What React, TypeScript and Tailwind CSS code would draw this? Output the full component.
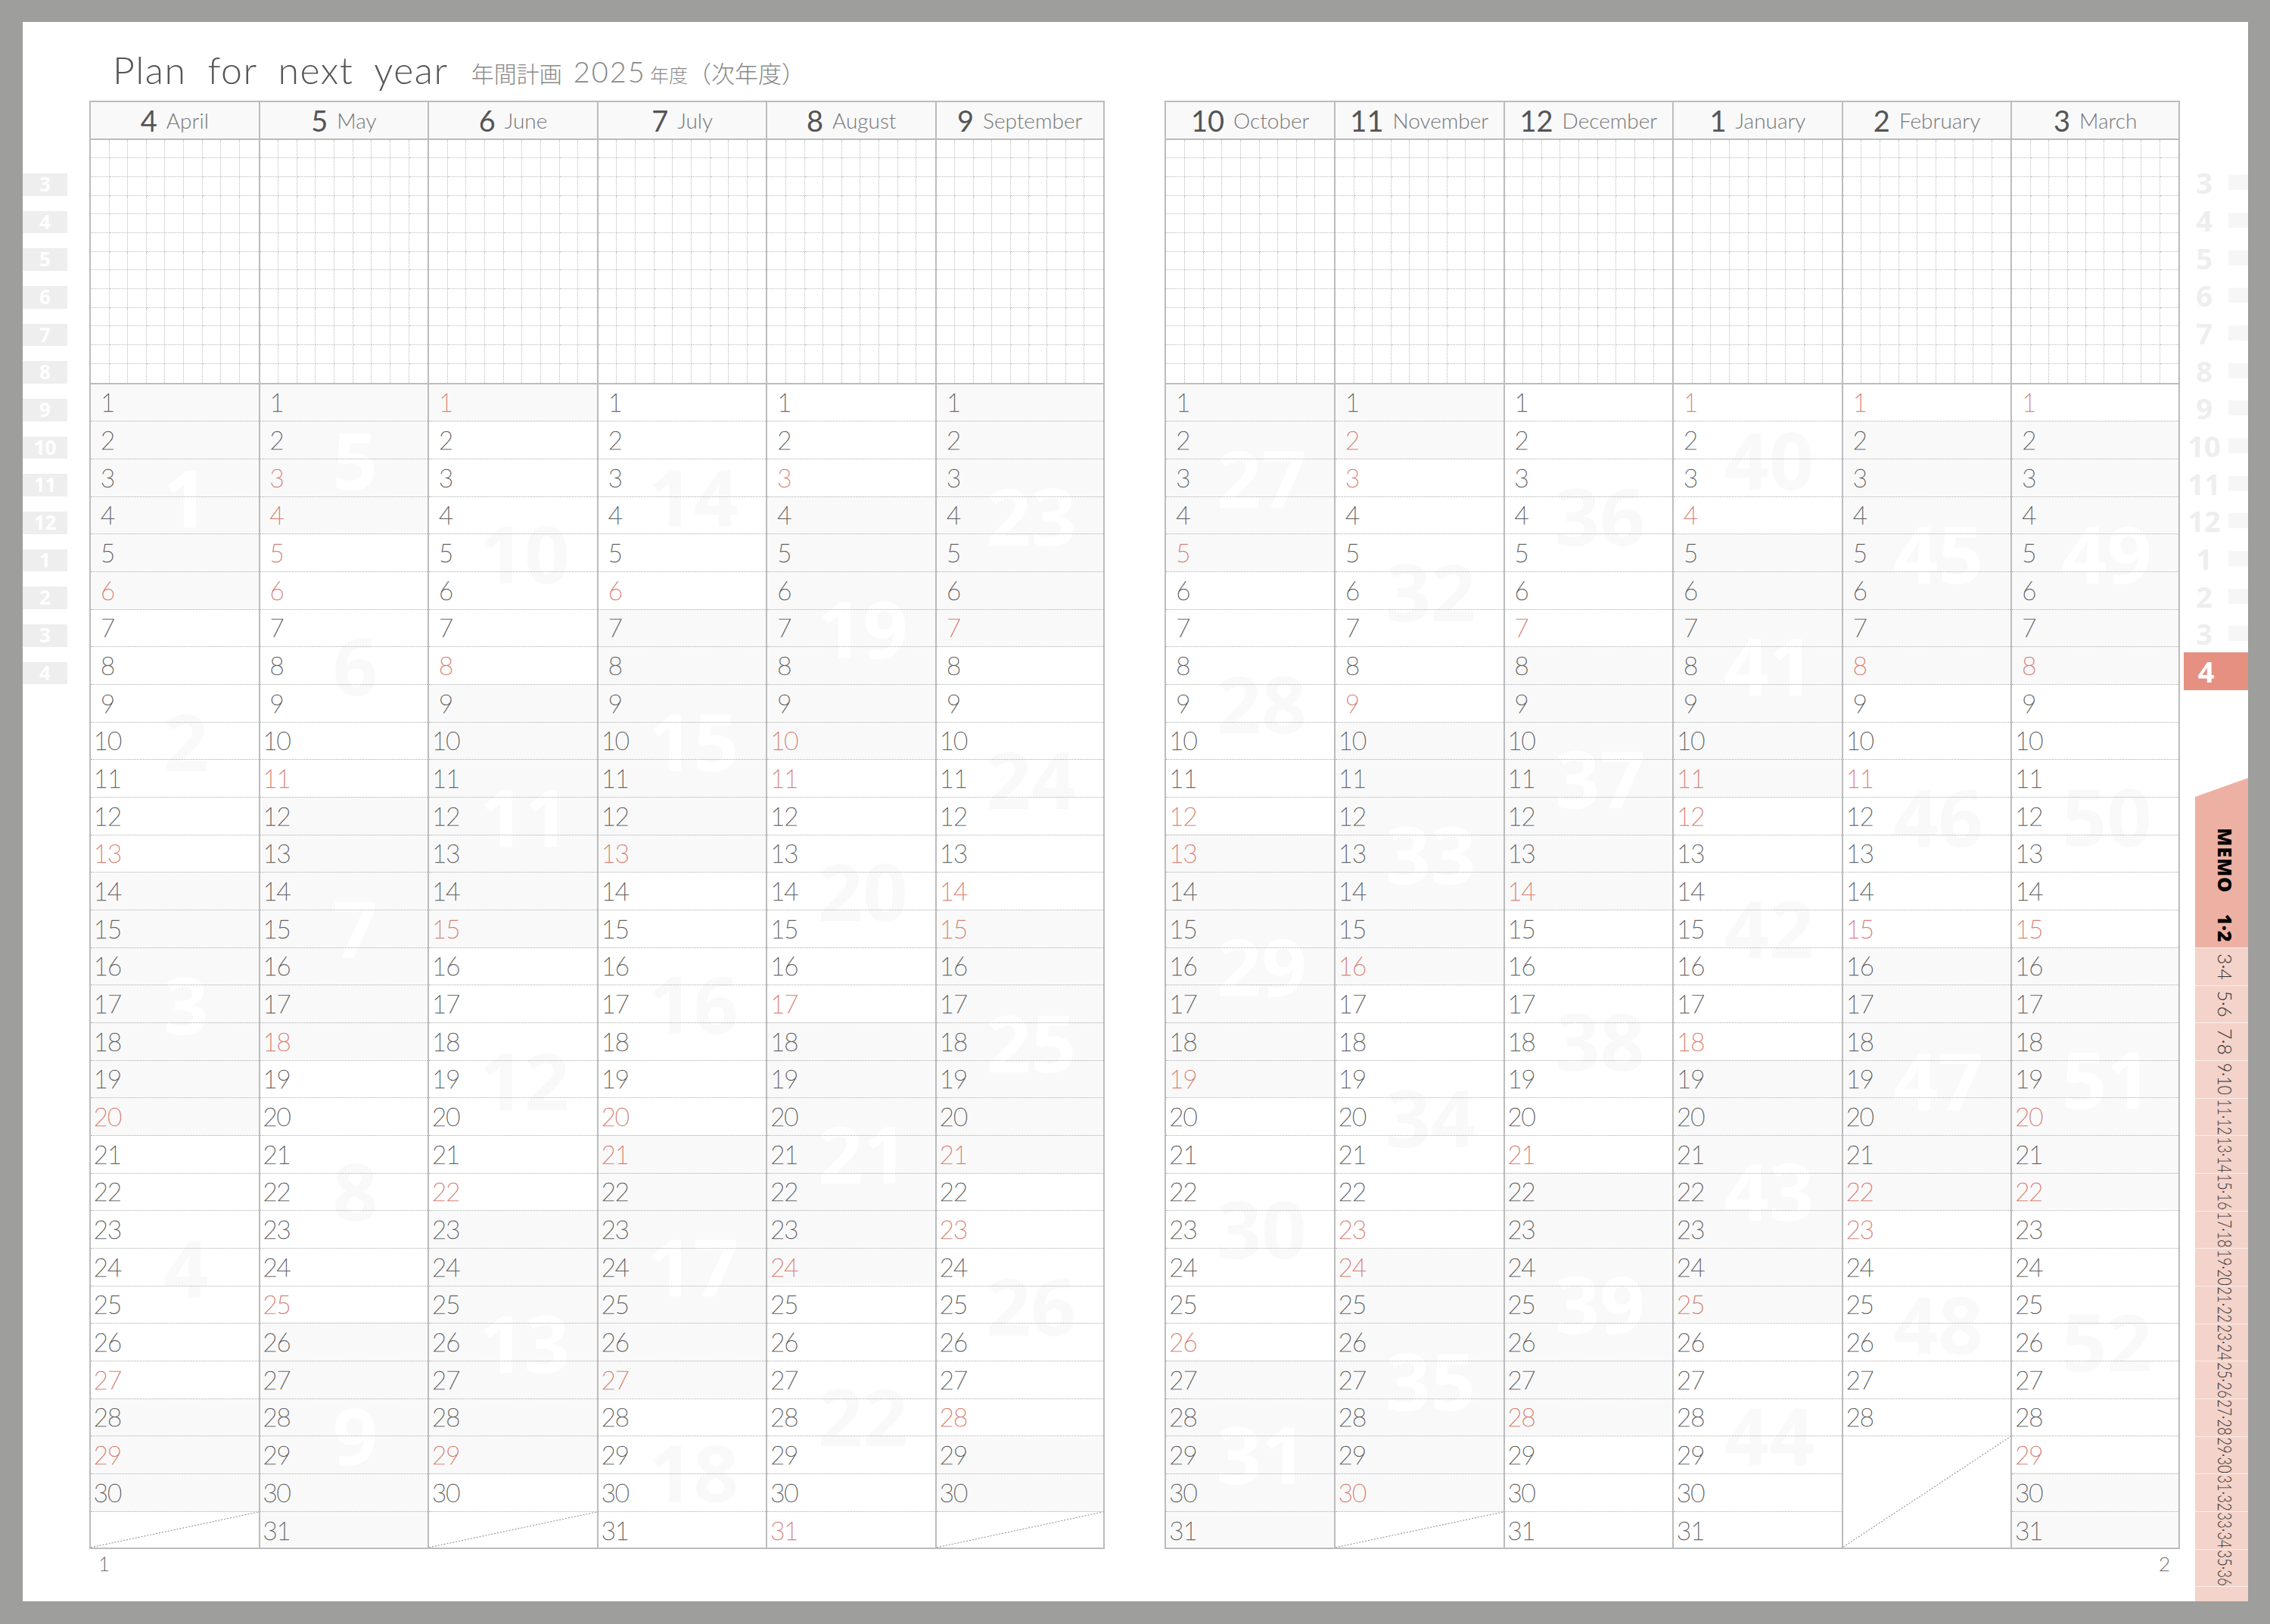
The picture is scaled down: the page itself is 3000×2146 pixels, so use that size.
type Month = { num: number; name: string; year: number; month: number; days: number; reds: number[] }

const firstSpread: Month[] = [
  { num: 4, name: 'April', year: 2025, month: 4, days: 30, reds: [6, 13, 20, 27, 29] },
  { num: 5, name: 'May', year: 2025, month: 5, days: 31, reds: [3, 4, 5, 6, 11, 18, 25] },
  { num: 6, name: 'June', year: 2025, month: 6, days: 30, reds: [1, 8, 15, 22, 29] },
  { num: 7, name: 'July', year: 2025, month: 7, days: 31, reds: [6, 13, 20, 21, 27] },
  { num: 8, name: 'August', year: 2025, month: 8, days: 31, reds: [3, 10, 11, 17, 24, 31] },
  { num: 9, name: 'September', year: 2025, month: 9, days: 30, reds: [7, 14, 15, 21, 23, 28] },
]

const secondSpread: Month[] = [
  { num: 10, name: 'October', year: 2025, month: 10, days: 31, reds: [5, 12, 13, 19, 26] },
  { num: 11, name: 'November', year: 2025, month: 11, days: 30, reds: [2, 3, 9, 16, 23, 24, 30] },
  { num: 12, name: 'December', year: 2025, month: 12, days: 31, reds: [7, 14, 21, 28] },
  { num: 1, name: 'January', year: 2026, month: 1, days: 31, reds: [1, 4, 11, 12, 18, 25] },
  { num: 2, name: 'February', year: 2026, month: 2, days: 28, reds: [1, 8, 11, 15, 22, 23] },
  { num: 3, name: 'March', year: 2026, month: 3, days: 31, reds: [1, 8, 15, 20, 22, 29] },
]

const ROW = 49.68
const leftTabs = [3, 4, 5, 6, 7, 8, 9, 10, 11, 12, 1, 2, 3, 4]
const rightTabs = [3, 4, 5, 6, 7, 8, 9, 10, 11, 12, 1, 2, 3]
const memoPages = [
  '3·4', '5·6', '7·8', '9·10', '11·12', '13·14', '15·16', '17·18', '19·20',
  '21·22', '23·24', '25·26', '27·28', '29·30', '31·32', '33·34', '35·36',
]

// weeks run monday to sunday, counted from the monday before April 1st
function weekOf(year: number, month: number, day: number) {
  const diff = Date.UTC(year, month - 1, day) - Date.UTC(2025, 2, 31)
  return Math.floor(diff / 86400000 / 7) + 1
}

function getBands(m: Month) {
  const bands: { week: number; count: number }[] = []
  for (let d = 1; d <= m.days; d++) {
    const week = weekOf(m.year, m.month, d)
    const last = bands[bands.length - 1]
    if (last && last.week === week) last.count++
    else bands.push({ week, count: 1 })
  }
  return bands
}

function MonthColumn({ m, last }: { m: Month; last: boolean }) {
  const bands = getBands(m)
  const days = Array.from({ length: m.days }, (_, i) => i + 1)
  const blank = 31 - m.days

  return (
    <div className={`flex flex-col w-[223.6px] border-l-2 border-[#bcbcbc] ${last ? 'border-r-2' : ''}`}>
      <div className="h-[50px] flex items-center justify-center gap-[12px] bg-[#f9f9f9] border-b-2 border-[#bcbcbc] text-[#555]">
        <span className="text-[38px] leading-none font-normal">{m.num}</span>
        <span className="text-[28px] leading-none font-light text-[#777]">{m.name}</span>
      </div>

      <div className="h-[323px] grid grid-cols-9 grid-rows-13 border-b-2 border-[#bcbcbc]">
        {Array.from({ length: 117 }, (_, i) => (
          <div
            key={i}
            className="border-r border-b border-dotted border-[#bbbbbb] [&:nth-child(9n)]:border-r-0 [&:nth-last-child(-n+9)]:border-b-0"
          />
        ))}
      </div>

      <div className="relative h-[1537px] flex flex-col">
        <div className="absolute inset-0 flex flex-col overflow-hidden">
          {bands.map((b) => (
            <div
              key={b.week}
              className={`flex items-center justify-center pl-[30px] font-['Open_Sans',sans-serif] font-bold text-[104px] leading-none ${
                b.week % 2 === 1 ? 'bg-[#f9f9f9] text-white' : 'bg-white text-[#f9f9f9]'
              }`}
              style={{ height: b.count * ROW }}
            >
              {b.count >= 4 ? b.week : ''}
            </div>
          ))}
        </div>

        {days.map((d) => (
          <div key={d} className="relative h-[49.68px] shrink-0 flex items-center border-b border-dotted border-[#ababab] last:border-b-0">
            <span
              className={`w-[44px] text-center text-[33px] leading-none font-thin tracking-[-1px] [-webkit-text-stroke:0.6px_currentColor] ${
                m.reds.includes(d) ? 'text-[#d5796c]' : 'text-[#5a5a5a]'
              }`}
            >
              {d}
            </span>
          </div>
        ))}

        {blank > 0 && (
          <svg className="relative w-full" style={{ height: blank * ROW }} viewBox="0 0 100 100" preserveAspectRatio="none">
            <line x1="0" y1="100" x2="100" y2="0" stroke="#8a8a8a" strokeWidth="1" strokeDasharray="2 2" vectorEffect="non-scaling-stroke" />
          </svg>
        )}
      </div>
    </div>
  )
}

function Spread({ months }: { months: Month[] }) {
  return (
    <div className="flex w-[1341.6px] border-t-2 border-b-2 border-[#bcbcbc]">
      {months.map((m, i) => (
        <MonthColumn key={m.name} m={m} last={i === 5} />
      ))}
    </div>
  )
}

function App() {
  return (
    <div className="w-[3000px] h-[2146px] bg-[#9e9f9d] pt-[29px] pl-[30px] font-['Lato','Noto_Sans_CJK_JP',sans-serif]">
      <div className="w-[2941px] h-[2087px] bg-white flex overflow-hidden">
        <div className="w-[59px] pt-[200px] flex flex-col">
          {leftTabs.map((t, i) => (
            <div key={i} className="h-[49.68px] shrink-0">
              <div className="h-[29.5px] bg-[#eeeeee] text-white font-bold text-[26px] leading-[29.5px] text-center font-['Open_Sans',sans-serif]">
                {t}
              </div>
            </div>
          ))}
        </div>

        <div className="ml-[29px] w-[2763px] flex flex-col">
          <div className="h-[103.5px] pl-[31px] pb-[16px] flex items-end text-[#555]">
            <span className="text-[50px] leading-none font-light tracking-[1.5px] [word-spacing:13px]">Plan for next year</span>
            <span className="ml-[30px] flex items-baseline text-[30px] leading-[37px] font-light text-[#888] font-['Noto_Sans_CJK_JP',sans-serif]">
              年間計画
              <span className="ml-[15px] font-['Lato'] text-[38px] tracking-[2px]">2025</span>
              <span className="ml-[5px] text-[25px]">年度</span>
              <span className="text-[31px]">（次年度）</span>
            </span>
          </div>

          <div className="flex justify-between">
            <Spread months={firstSpread} />
            <Spread months={secondSpread} />
          </div>

          <div className="flex justify-between pl-[12px] pr-[13px] text-[26px] font-thin text-[#5a5a5a] [-webkit-text-stroke:0.6px_currentColor]">
            <span>1</span>
            <span>2</span>
          </div>
        </div>

        <div className="flex-1 pt-[187.5px] flex flex-col">
          {rightTabs.map((t, i) => (
            <div key={i} className="h-[49.68px] shrink-0 flex items-center">
              <span className="w-[64px] text-center text-[38px] leading-none font-bold text-[#eeeeee] font-['Open_Sans',sans-serif]">{t}</span>
              <div className="w-[26px] ml-auto h-[20px] bg-[#f6f6f6]" />
            </div>
          ))}

          <div className="ml-[5px] h-[49.68px] shrink-0 bg-[#e59080] flex items-center">
            <span className="w-[59px] text-center text-[38px] leading-none font-bold text-white font-['Open_Sans',sans-serif]">4</span>
          </div>

          <div className="mt-[116px] ml-[20px] h-[224px] shrink-0 pt-[66px] pl-[8px] flex flex-col items-center gap-[28px] bg-[#edb1a4] [clip-path:polygon(0_25px,100%_0,100%_100%,0_100%)] text-black font-extrabold text-[25px] leading-none font-['Open_Sans',sans-serif]">
            <span className="[writing-mode:vertical-rl] tracking-[1px]">MEMO</span>
            <span className="[writing-mode:vertical-rl]">1·2</span>
          </div>

          {memoPages.map((p) => (
            <div key={p} className="ml-[20px] h-[49.68px] shrink-0 pl-[8px] flex items-center justify-center bg-[#f4d3ca] border-t border-[#fbeeea] overflow-hidden">
              <span
                className={`[writing-mode:vertical-rl] text-[25px] leading-none font-light text-[#333] ${
                  p.length === 3 ? '' : p.length === 4 ? 'scale-y-[.85]' : 'scale-y-[.74]'
                }`}
              >
                {p}
              </span>
            </div>
          ))}

          <div className="ml-[20px] flex-1 bg-[#f4d3ca] border-t border-[#fbeeea]" />
        </div>
      </div>
    </div>
  )
}

export default App
